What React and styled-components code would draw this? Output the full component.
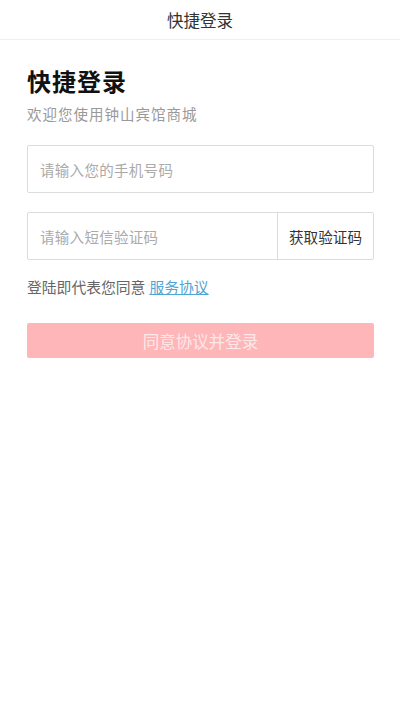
import styled, { createGlobalStyle } from "styled-components"

const GlobalStyle = createGlobalStyle`
  html, body {
    margin: 0;
    padding: 0;
    background: #fff;
    font-family: "Noto Sans CJK SC", "Noto Sans", sans-serif;
  }
`;

const Page = styled.div`
  width: 400px;
  min-height: 711px;
  background: #fff;
`;

const NavBar = styled.div`
  height: 39px;
  display: flex;
  align-items: center;
  justify-content: center;
  border-bottom: 1px solid #f0f0f0;
  font-size: 16.5px;
  color: #333;
`;

const Content = styled.div`
  padding: 26px 26px 0 27px;
`;

const Title = styled.h1`
  margin: 0;
  font-size: 24px;
  letter-spacing: 1px;
  font-weight: 700;
  color: #111;
  line-height: 30px;
`;

const Subtitle = styled.p`
  margin: 7px 0 0;
  font-size: 14.5px;
  letter-spacing: 1px;
  line-height: 22px;
  color: #999;
`;

const Field = styled.div`
  display: flex;
  height: 46px;
  margin-top: ${props => props.top}px;
  border: 1px solid #dcdcdc;
  border-radius: 2px;
`;

const Input = styled.input`
  flex: 1;
  min-width: 0;
  border: none;
  outline: none;
  padding: 0 12px;
  font-family: inherit;
  font-size: 14.5px;
  letter-spacing: 0.3px;
  color: #333;
  background: transparent;

  &::placeholder {
    color: #aaa;
  }
`;

const CodeButton = styled.button`
  width: 96px;
  border: none;
  border-left: 1px solid #dcdcdc;
  background: transparent;
  font-family: inherit;
  font-size: 14.6px;
  color: #333;
  padding: 0;
`;

const Agreement = styled.p`
  margin: 17px 0 0;
  font-size: 14.8px;
  line-height: 20px;
  color: #666;

  a {
    color: #4ea6d4;
    text-decoration: underline;
    margin-left: 4px;
  }
`;

const LoginButton = styled.button`
  display: block;
  width: 100%;
  height: 35px;
  margin-top: 26px;
  border: none;
  border-radius: 2px;
  background: #ffb6b8;
  color: #fde8e9;
  font-family: inherit;
  font-size: 16.5px;
`;

const App = () => {
  return (
    <Page>
      <GlobalStyle />
      <NavBar>快捷登录</NavBar>
      <Content>
        <Title>快捷登录</Title>
        <Subtitle>欢迎您使用钟山宾馆商城</Subtitle>
        <Field top={20}>
          <Input placeholder="请输入您的手机号码" />
        </Field>
        <Field top={19}>
          <Input placeholder="请输入短信验证码" />
          <CodeButton>获取验证码</CodeButton>
        </Field>
        <Agreement>
          登陆即代表您同意<a>服务协议</a>
        </Agreement>
        <LoginButton>同意协议并登录</LoginButton>
      </Content>
    </Page>
  )
}

export default App;
